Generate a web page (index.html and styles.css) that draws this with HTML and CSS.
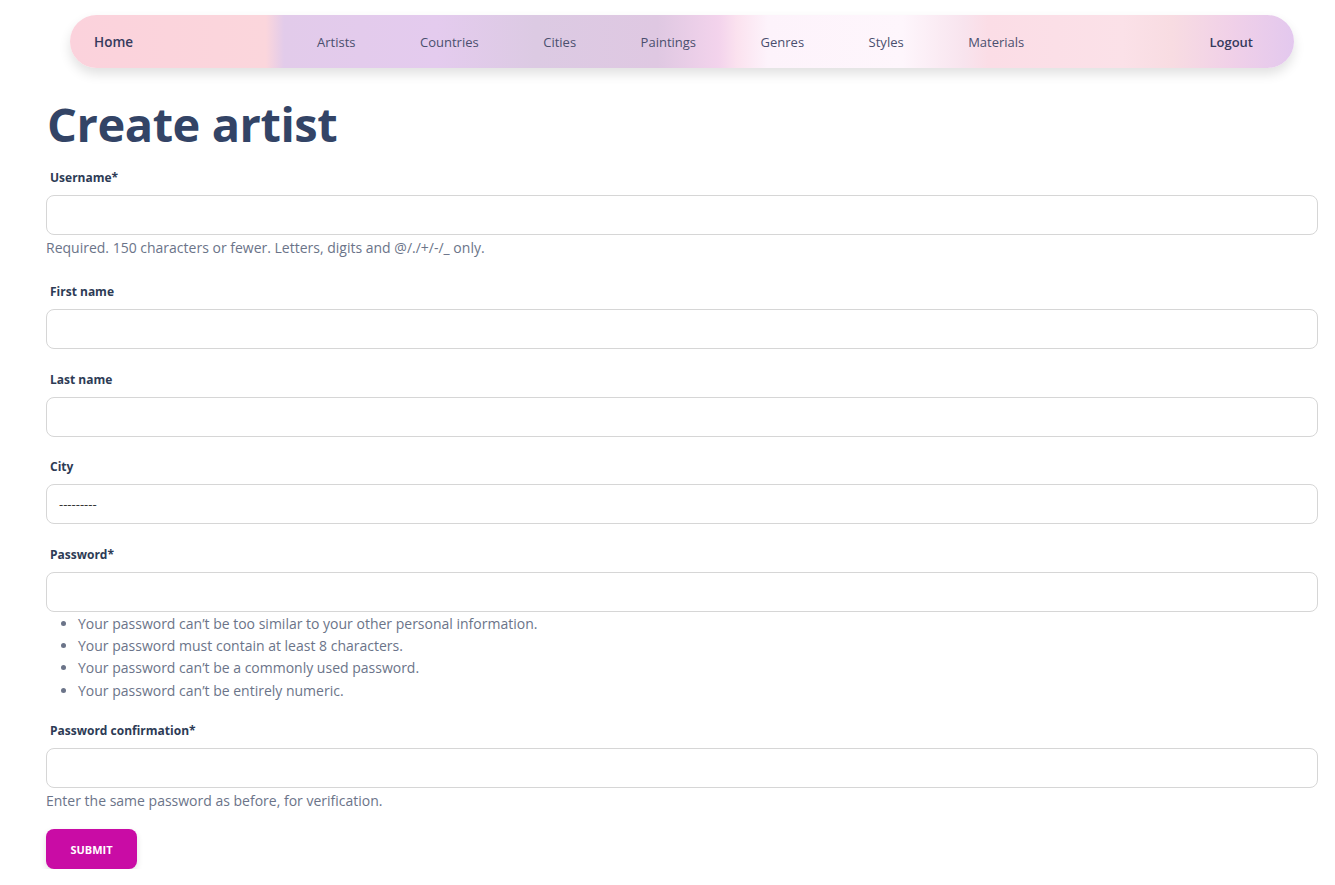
FILE: index.html
```html
<!DOCTYPE html>
<html lang="en">
<head>
<meta charset="utf-8">
<title>Create artist</title>
<link rel="stylesheet" href="styles.css">
</head>
<body>
<nav class="navbar">
  <a class="nav-home" href="#">Home</a>
  <ul class="nav-links">
    <li><a href="#">Artists</a></li>
    <li><a href="#">Countries</a></li>
    <li><a href="#">Cities</a></li>
    <li><a href="#">Paintings</a></li>
    <li><a href="#">Genres</a></li>
    <li><a href="#">Styles</a></li>
    <li><a href="#">Materials</a></li>
  </ul>
  <a class="nav-logout" href="#">Logout</a>
</nav>
<main class="content">
  <h1 class="title">Create artist</h1>
  <form class="form">
    <div class="field with-help">
      <label class="label">Username*</label>
      <input class="input" type="text">
      <div class="help">Required. 150 characters or fewer. Letters, digits and @/./+/-/_ only.</div>
    </div>
    <div class="field">
      <label class="label">First name</label>
      <input class="input" type="text">
    </div>
    <div class="field">
      <label class="label">Last name</label>
      <input class="input" type="text">
    </div>
    <div class="field">
      <label class="label">City</label>
      <div class="input select">---------</div>
    </div>
    <div class="field with-list">
      <label class="label">Password*</label>
      <input class="input" type="password">
      <ul class="help-list">
        <li>Your password can’t be too similar to your other personal information.</li>
        <li>Your password must contain at least 8 characters.</li>
        <li>Your password can’t be a commonly used password.</li>
        <li>Your password can’t be entirely numeric.</li>
      </ul>
    </div>
    <div class="field last">
      <label class="label">Password confirmation*</label>
      <input class="input" type="password">
      <div class="help">Enter the same password as before, for verification.</div>
    </div>
    <button class="submit" type="button">SUBMIT</button>
  </form>
</main>
</body>
</html>
```
FILE: styles.css
```css
* { box-sizing: border-box; }
html, body { margin: 0; padding: 0; background: #fff; }
body {
  font-family: "Open Sans", "Noto Sans", sans-serif;
  color: #344767;
}
.navbar {
  margin: 15px 0 0 70px;
  width: 1224px;
  height: 53px;
  border-radius: 27px;
  display: flex;
  align-items: center;
  padding: 0 41px 0 24px;
  box-shadow: 0 6px 12px rgba(0,0,0,0.12);
  background: linear-gradient(90deg,
    #fbd2dc 0%, #fbd6dc 16%, #e2cbea 17.5%, #e4cbee 30%, #dccae3 38%,
    #dfc8e2 48%, #f3d3ec 53%, #fbe2ef 54.5%, #fdf3fb 57%, #fef6fc 68%,
    #f8e4ee 73%, #fbdde6 75%, #fbe1e8 86%, #f8dce2 90%, #f0d0e8 95%, #e3c8ee 100%);
}
.navbar a {
  text-decoration: none;
  font-size: 13px;
  line-height: 18px;
  color: #4a4f6e;
  display: block;
}
.nav-home, .nav-logout {
  font-weight: 600;
  color: #353a5c !important;
}
.nav-home { font-size: 13.5px !important; }
.nav-links {
  list-style: none;
  margin: 0 0 0 184px;
  padding: 0;
  display: flex;
  gap: 64.5px;
}
.nav-logout { margin-left: auto; }
.content {
  padding: 0 17px 0 46px;
}
.title {
  margin: 24px 0 14px 1px;
  font-size: 47px;
  line-height: 64px;
  font-weight: 700;
  color: #334466;
  letter-spacing: -0.45px;
}
.field { margin-bottom: 22.5px; }
.field.with-help { margin-bottom: 26px; }
.field.with-list { margin-bottom: 21px; }
.field.last { margin-bottom: 18px; }
.label {
  display: block;
  margin: 0 0 9px 4px;
  font-size: 12px;
  line-height: 16px;
  font-weight: 700;
  color: #2d3b55;
}
.input {
  display: block;
  width: 100%;
  height: 40px;
  border: 1px solid #d6d6d6;
  border-radius: 8px;
  background: #fff;
  font-family: inherit;
  font-size: 13px;
  padding: 0 12px;
  outline: none;
}
.select {
  display: flex;
  align-items: center;
  color: #333;
  font-size: 13px;
}
.help {
  margin: 3px 0 0;
  font-size: 14px;
  line-height: 20px;
  color: #6b7489;
}
.help-list {
  margin: 1px 0 0;
  padding-left: 32px;
  font-size: 14px;
  line-height: 22.4px;
  color: #6b7489;
}
.submit {
  width: 91px;
  height: 40px;
  border: none;
  border-radius: 8px;
  background: #c90ca5;
  color: #fff;
  font-family: inherit;
  font-size: 11px;
  font-weight: 700;
  box-shadow: 0 3px 6px rgba(0,0,0,0.12);
}
```
